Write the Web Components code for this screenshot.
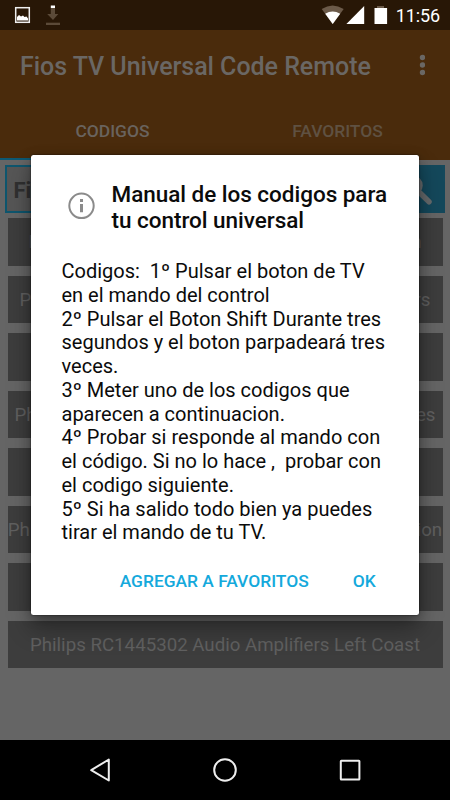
<!DOCTYPE html>
<html lang="es"><head><meta charset="utf-8"><title>Fios TV Universal Code Remote</title>
<style>html,body{margin:0;width:450px;height:800px;overflow:hidden;background:#666;font-family:Roboto,"Noto Sans",sans-serif}</style></head>
<body><remote-app></remote-app>
<script>
const define=(name,html)=>customElements.define(name,class extends HTMLElement{
  constructor(){super();this.attachShadow({mode:'open'}).innerHTML=html}
});
define('status-bar',`<style>:host{display:flex;height:30px;background:#281706;color:#fff}svg{display:block}
:host{justify-content:space-between}.t{font-size:18px;line-height:31px;font-weight:450;padding-right:10px;letter-spacing:-.1px;display:flex}</style>
<svg width="70" height="30"><rect x="15.7" y="7.7" width="13.6" height="14.6" fill="#281706" stroke="#eee" stroke-width="1.5"/><path d="M17 20.5V17l2-2 2 1.5 2-1 1.5 1.5 2-.5 1.5 2v2z" fill="#fff"/><path d="M50.8 8h4.2v6h3.3L53 20l-5.8-6h3.6z" fill="#5b4a38"/><path d="M50.8 5.5h4.2V8h-4.2z" fill="#fff"/><path d="M46 22.7h14V25H46z" fill="#5b4a38"/></svg>
<div class="t"><svg width="75" height="30"><path d="M.7 9.1Q11.5 2 22.7 9.1L11.7 24z" fill="#6b5a49"/><path d="M4.2 13.7Q11.5 9.2 19.2 13.7L11.7 24z" fill="#fff"/><path d="M25.4 24H43.2V6z" fill="#fff"/><path d="M56 6h7v2h-7z" fill="#6b5a49"/><path d="M53.5 8h12.6v16H53.5z" fill="#fff"/></svg><span>11:56</span></div>`);
define('app-header',`<style>:host{display:block;height:130px;background:#4a2b0c;color:#6a6764}
.b{height:71px;display:flex;justify-content:space-between;padding:0 25px 0 20px;font-size:25px;font-weight:500;line-height:73px;letter-spacing:-.03px}
.tabs{display:flex;height:59px;font-size:17.4px;font-weight:500;line-height:60px;text-align:center;color:#69635e}
.tabs div{flex:1;box-sizing:border-box}.on{border-bottom:2.5px solid #0e5973}.tabs div+div{color:#5f5142}</style>
<div class="b"><span>Fios TV Universal Code Remote</span><svg width="15" height="71" fill="#6a6764"><circle cx="12.5" cy="27.5" r="2.7"/><circle cx="12.5" cy="35" r="2.7"/><circle cx="12.5" cy="42.5" r="2.7"/></svg></div>
<div class="tabs"><div class="on">CODIGOS</div><div>FAVORITOS</div></div>`);
define('search-box',`<style>:host{display:flex;height:48px;margin:5px 5px 0}
.f{box-sizing:border-box;flex:1;border:2px solid #0e566e;background:#565656;color:#303030;font-weight:700;font-size:22px;line-height:47px;padding-left:6.5px}
.s{width:48px;background:#14485b}svg{display:block}</style><div class="f">Fios</div>
<div class="s"><svg width="48" height="48" fill="none" stroke="#666a6c" stroke-width="4.5" stroke-linecap="round"><circle cx="15.5" cy="20.5" r="8"/><path d="M22.5 27.5L32 36.8" stroke-width="5.5"/></svg></div>`);
define('code-row',`<style>:host{display:flex;box-sizing:border-box;height:47.5px;background:#3d3d3d;color:#606060;font-size:18.7px;line-height:49px;justify-content:space-between;white-space:nowrap}
:host([center]){justify-content:center}</style><slot></slot>`);
define('info-dialog',`<style>:host{position:absolute;left:31px;top:155px;width:388px;height:460px;box-sizing:border-box;border-radius:2.5px;background:#fff;color:#0b0b0b;padding:25.5px 30px 0 30.5px;display:flex;flex-direction:column;box-shadow:0 0 1.5px #000,0 14px 24px rgba(0,0,0,.32),0 3px 12px rgba(0,0,0,.25)}
.h{display:flex;font-weight:500;font-size:22.5px;line-height:26px;height:52px;letter-spacing:-.03px}.h svg{margin:5px 10px 0 0;flex:none}
.m{margin-top:27.5px;font-size:20px;line-height:23.77px;white-space:pre;flex:none;letter-spacing:0}
.a{display:flex;justify-content:flex-end;gap:44px;font-weight:500;font-size:17.4px;line-height:22px;color:#14a9dc;margin-top:25px;padding-right:13.3px}</style>
<div class="h"><svg width="40" height="40" fill="none"><circle cx="19.5" cy="19.8" r="12.2" stroke="#8b8b8b" stroke-width="2"/><path d="M19.5 18v8.3M19.5 13v3" stroke="#8b8b8b" stroke-width="3"/></svg><div>Manual de los codigos para<br>tu control universal</div></div>
<div class="m">Codigos:  1º Pulsar el boton de TV
en el mando del control
2º Pulsar el Boton Shift Durante tres
segundos y el boton parpadeará tres
veces.
3º Meter uno de los codigos que
aparecen a continuacion.
4º Probar si responde al mando con
el código. Si no lo hace ,  probar con
el codigo siguiente.
5º Si ha salido todo bien ya puedes
tirar el mando de tu TV.</div>
<div class="a"><span>AGREGAR A FAVORITOS</span><span>OK</span></div>`);
define('nav-bar',`<style>:host{display:block;height:60px;background:#000}svg{display:block}</style>
<svg width="450" height="60" fill="none" stroke="#eee" stroke-width="2" stroke-linejoin="round"><path d="M108.8 19.5v21L91.2 30.2z"/><circle cx="225" cy="30" r="10.8"/><rect x="340.8" y="20.8" width="18.6" height="18.8" rx=".5"/></svg>`);
define('remote-app',`<style>:host{display:flex;flex-direction:column;position:relative;width:450px;height:800px;overflow:hidden;background:#656565}
.l{display:flex;flex-direction:column;gap:10px;padding:5px 7.5px 0;flex:1}.p1{padding:0 21px}.p2{padding:0 12px}.p3{padding:0 7px}.p5{padding:0 .3px}</style>
<status-bar></status-bar><app-header></app-header><search-box></search-box>
<div class="l"><code-row class="p1"><span>P</span><span>n</span></code-row><code-row class="p2"><span>P</span><span>rs</span></code-row><code-row></code-row><code-row class="p3"><span>Ph</span><span>es</span></code-row><code-row></code-row><code-row class="p5"><span>Phi</span><span>ion</span></code-row><code-row></code-row><code-row center>Philips RC1445302 Audio Amplifiers Left Coast</code-row></div>
<nav-bar></nav-bar><info-dialog></info-dialog>`);
</script></body></html>
